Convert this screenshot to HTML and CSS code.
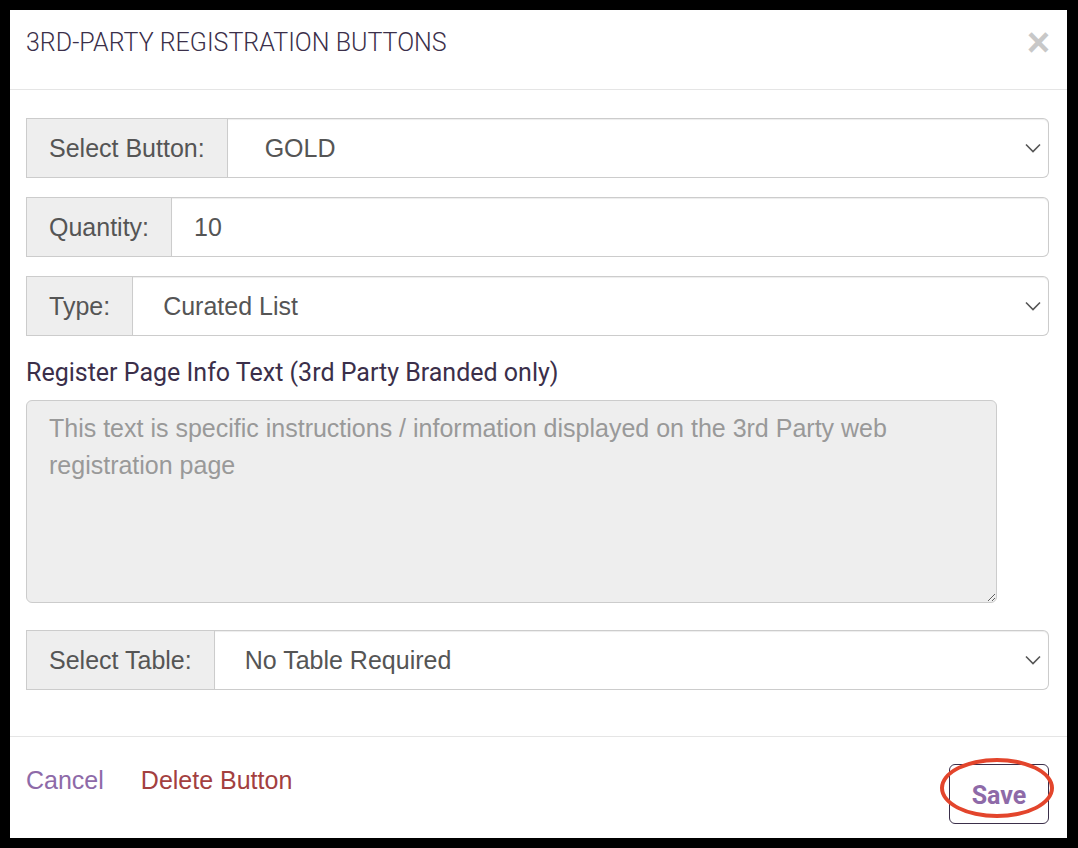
FILE: index.html
```html
<!DOCTYPE html>
<html lang="en">
<head>
  <meta charset="UTF-8" />
  <title>3rd-Party Registration Buttons</title>
  <link rel="stylesheet" href="styles.css">
</head>
<body>
  <div class="modal">
    <div class="modal-header">
      <h4 class="modal-title">3RD-PARTY REGISTRATION BUTTONS</h4>
      <button class="close" type="button">&times;</button>
    </div>

    <form class="modal-body">
      <div class="input-group">
        <span class="addon">Select Button:</span>
        <div class="select-wrap">
          <select class="control select-gold">
            <option>GOLD</option>
            <option>SILVER</option>
            <option>BRONZE</option>
          </select>
          <svg class="chevron" width="16" height="10" viewBox="0 0 16 10"><path d="M1 1.5 L8 8.5 L15 1.5" fill="none" stroke="#555" stroke-width="1.6"/></svg>
        </div>
      </div>

      <div class="input-group">
        <span class="addon">Quantity:</span>
        <input class="control" type="number" value="10" />
      </div>

      <div class="input-group">
        <span class="addon">Type:</span>
        <div class="select-wrap">
          <select class="control">
            <option>Curated List</option>
            <option>Open</option>
          </select>
          <svg class="chevron" width="16" height="10" viewBox="0 0 16 10"><path d="M1 1.5 L8 8.5 L15 1.5" fill="none" stroke="#555" stroke-width="1.6"/></svg>
        </div>
      </div>

      <label class="field-label" for="infoText">Register Page Info Text (3rd Party Branded only)</label>
      <textarea id="infoText" class="info-text" placeholder="This text is specific instructions / information displayed on the 3rd Party web registration page"></textarea>

      <div class="input-group">
        <span class="addon">Select Table:</span>
        <div class="select-wrap">
          <select class="control">
            <option>No Table Required</option>
          </select>
          <svg class="chevron" width="16" height="10" viewBox="0 0 16 10"><path d="M1 1.5 L8 8.5 L15 1.5" fill="none" stroke="#555" stroke-width="1.6"/></svg>
        </div>
      </div>
    </form>

    <div class="modal-footer">
      <div class="links">
        <a href="#" class="cancel">Cancel</a>
        <a href="#" class="delete">Delete Button</a>
      </div>
      <button class="save" type="button">Save</button>
    </div>
  </div>
</body>
</html>
```

FILE: styles.css
```css
html, body {
  margin: 0;
  height: 100%;
}
body {
  background-color: #000;
  padding: 10px 11px 10px 10px;
  box-sizing: border-box;
  font-family: "Liberation Sans", Arial, sans-serif;
  font-size: 25px;
  color: #555;
}
.modal {
  background-color: #fff;
  height: 100%;
  display: flex;
  flex-direction: column;
}
.modal-header {
  height: 79px;
  box-sizing: content-box;
  border-bottom: 1px solid #e5e5e5;
  display: flex;
  align-items: flex-start;
  justify-content: space-between;
  padding: 0 17px 0 16px;
}
.modal-title {
  margin: 0;
  padding-top: 18px;
  font-family: Roboto, sans-serif;
  font-weight: 300;
  font-size: 25px;
  line-height: 30px;
  color: #3b2f4a;
}
.close {
  background: none;
  border: none;
  padding: 0;
  margin-top: 17px;
  font-family: "Liberation Sans", Arial, sans-serif;
  font-weight: 700;
  font-size: 40px;
  line-height: 30px;
  color: #c8c8c8;
  cursor: pointer;
}
.modal-body {
  flex: 1;
  padding: 28px 18px 0 16px;
}
.input-group {
  display: flex;
  height: 60px;
  margin-bottom: 19px;
}
.addon {
  display: flex;
  align-items: center;
  padding: 0 22px 0 22px;
  background-color: #eee;
  border: 1px solid #ccc;
  color: #555;
  white-space: nowrap;
}
.control {
  flex: 1;
  min-width: 0;
  height: 60px;
  box-sizing: border-box;
  border: 1px solid #ccc;
  border-left: none;
  border-radius: 0 6px 6px 0;
  box-shadow: inset 0 1px 1px rgba(0, 0, 0, 0.075);
  background-color: #fff;
  font-family: "Liberation Sans", Arial, sans-serif;
  font-size: 25px;
  color: #555;
  padding: 0 22px;
  outline: none;
}
input.control::-webkit-inner-spin-button {
  -webkit-appearance: none;
}
.select-wrap {
  flex: 1;
  display: flex;
  position: relative;
}
.select-wrap select {
  -webkit-appearance: none;
  appearance: none;
  padding-left: 30px;
  width: 100%;
}
.select-wrap select.select-gold {
  padding-left: 37px;
}
.chevron {
  position: absolute;
  right: 8px;
  top: 25px;
  pointer-events: none;
}
.field-label {
  display: block;
  font-family: Roboto, sans-serif;
  font-size: 25px;
  line-height: 36px;
  color: #3b2f4a;
  margin: 0 0 9px;
}
.info-text {
  display: block;
  width: 971px;
  height: 203px;
  box-sizing: border-box;
  background-color: #eee;
  border: 1px solid #ccc;
  border-radius: 6px;
  padding: 9px 22px;
  resize: vertical;
  font-family: "Liberation Sans", Arial, sans-serif;
  font-size: 25px;
  line-height: 37px;
  color: #555;
  margin-bottom: 27px;
  outline: none;
}
.info-text::placeholder {
  color: #999;
}
.modal-footer {
  height: 102px;
  border-top: 1px solid #e5e5e5;
  display: flex;
  justify-content: space-between;
  align-items: flex-start;
  padding: 27px 18px 0 16px;
  box-sizing: border-box;
}
.links {
  display: flex;
  gap: 37px;
  padding-top: 2px;
}
.links a {
  text-decoration: none;
}
.cancel {
  color: #8e6aa8;
}
.delete {
  color: #a3403f;
}
.save {
  position: relative;
  width: 100px;
  height: 60px;
  background: #fff;
  border: 1px solid #3b2f4a;
  border-radius: 6px;
  font-family: Roboto, sans-serif;
  font-weight: 700;
  font-size: 25px;
  color: #8e6aa8;
  padding: 3px 0 0;
  cursor: pointer;
}
/* red annotation ring around the save button */
.save::after {
  content: "";
  position: absolute;
  left: -10px;
  top: -7px;
  width: 106px;
  height: 52px;
  border: 4px solid #e3452c;
  border-radius: 50%;
}
```
